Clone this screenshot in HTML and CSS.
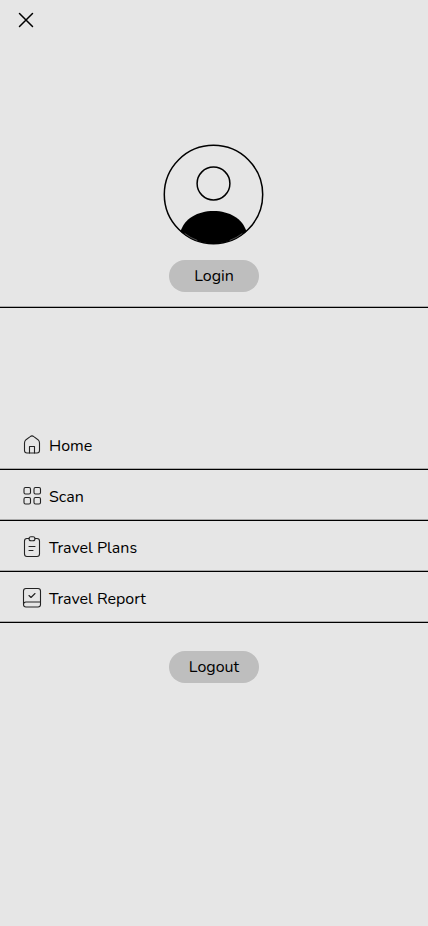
FILE: index.html
```html
<!DOCTYPE html>
<html lang="en">
<head>
<meta charset="utf-8">
<meta name="viewport" content="width=device-width, initial-scale=1">
<title>Menu</title>
<link rel="stylesheet" href="styles.css">
</head>
<body>
<header class="profile">
  <button class="close" type="button" aria-label="Close">
    <svg width="16" height="16" viewBox="0 0 16 16"><path d="M1.5 1.5l13 13M14.5 1.5l-13 13"/></svg>
  </button>
  <svg class="avatar" width="100" height="100" viewBox="0.5 0.5 100 100" aria-hidden="true">
    <circle cx="50" cy="50" r="49.2"/>
    <circle cx="50" cy="39" r="16.4"/>
    <path class="avatar-body" d="M17 87C21 74 34 66.5 50 66.5S79 74 83 87C75 94 64 99 50 99S25 94 17 87Z"/>
    <path class="avatar-gap" d="M21.5 89.2Q27 93.5 33.5 95.8M78.5 89.2Q73 93.5 66.5 95.8"/>
  </svg>
  <button class="pill" type="button">Login</button>
</header>
<nav class="menu">
  <a class="item" href="#home">
    <svg class="icon" width="20" height="22" viewBox="0 0 20 22"><path d="M2.5 9Q2.500 7 4 5.700L8.200 2.600Q10 1.200 11.800 2.600L16 5.700Q17.500 7 17.500 9V16.500Q17.500 19 15 19H5Q2.500 19 2.500 16.500Z"/><path d="M7.500 19V12.500H12.500V19"/></svg>
    <span class="label">Home</span>
  </a>
  <a class="item" href="#scan">
    <svg class="icon" width="20" height="22" viewBox="0 0 20 22"><rect x="2" y="2.500" width="6.500" height="6.500" rx="1.500"/><rect x="12" y="2.500" width="6.500" height="6.500" rx="1.500"/><rect x="2" y="12.500" width="6.500" height="6.500" rx="1.500"/><rect x="12" y="12.500" width="6.500" height="6.500" rx="1.500"/></svg>
    <span class="label">Scan</span>
  </a>
  <a class="item" href="#plans">
    <svg class="icon" width="20" height="22" viewBox="0 0 20 22"><path d="M7 2.500H5Q2.500 2.500 2.500 5V18Q2.500 20.500 5 20.500H15Q17.500 20.500 17.500 18V5Q17.500 2.500 15 2.500H13"/><rect x="7" y="0.800" width="6" height="4" rx="2"/><path d="M7 10.500H13M7 14.500H11"/></svg>
    <span class="label">Travel Plans</span>
  </a>
  <a class="item" href="#report">
    <svg class="icon" width="20" height="22" viewBox="0 0 20 22"><path d="M1.500 17.500V4Q1.500 1.500 4 1.500H16Q18.500 1.500 18.500 4V17.500Q18.500 20 16 20H4Q1.500 20 1.500 17.500Q1.500 15 4 15H18.500"/><path d="M7 8.500L9 10.500L13 6.500"/></svg>
    <span class="label">Travel Report</span>
  </a>
</nav>
<footer class="session">
  <button class="pill" type="button">Logout</button>
</footer>
</body>
</html>
```
FILE: styles.css
```css
* {
  box-sizing: border-box;
}

body {
  margin: 0;
  min-height: 100vh;
  background: #e6e6e6;
  color: #000;
  font: 16px/24px Nunito, Lato, sans-serif;
}

svg {
  display: block;
  flex: none;
  overflow: visible;
  fill: none;
  stroke: #000;
  stroke-linecap: round;
  stroke-linejoin: round;
}

.icon {
  stroke: #222;
  stroke-width: 1.1;
}

.profile,
.item {
  border-bottom: 1px solid #000;
  box-shadow: inset 0 -1px #aaa;
}

.profile {
  display: flex;
  flex-direction: column;
  align-items: center;
  padding-bottom: 15px;
}

.close {
  align-self: flex-start;
  padding: 12px 18px;
  border: 0;
  background: none;
  cursor: pointer;
}

.close svg {
  stroke-width: 1.5;
}

.avatar {
  margin: 105px 0 15px;
  stroke-width: 1.5;
}

.avatar-body {
  fill: #000;
  stroke: none;
}

.avatar-gap {
  stroke: #999;
  stroke-width: 0.5;
}

.pill {
  width: 90px;
  height: 32px;
  padding: 0;
  border: 0;
  border-radius: 16px;
  background: #bebebe;
  color: inherit;
  font: inherit;
  cursor: pointer;
}

.menu {
  margin-top: 111px;
}

.item {
  display: flex;
  align-items: center;
  gap: 7px;
  height: 51px;
  padding: 2px 22px 0;
  color: inherit;
  text-decoration: none;
}

.label {
  padding-top: 2px;
}

.session {
  display: flex;
  justify-content: center;
  padding: 28px 0;
}
```
